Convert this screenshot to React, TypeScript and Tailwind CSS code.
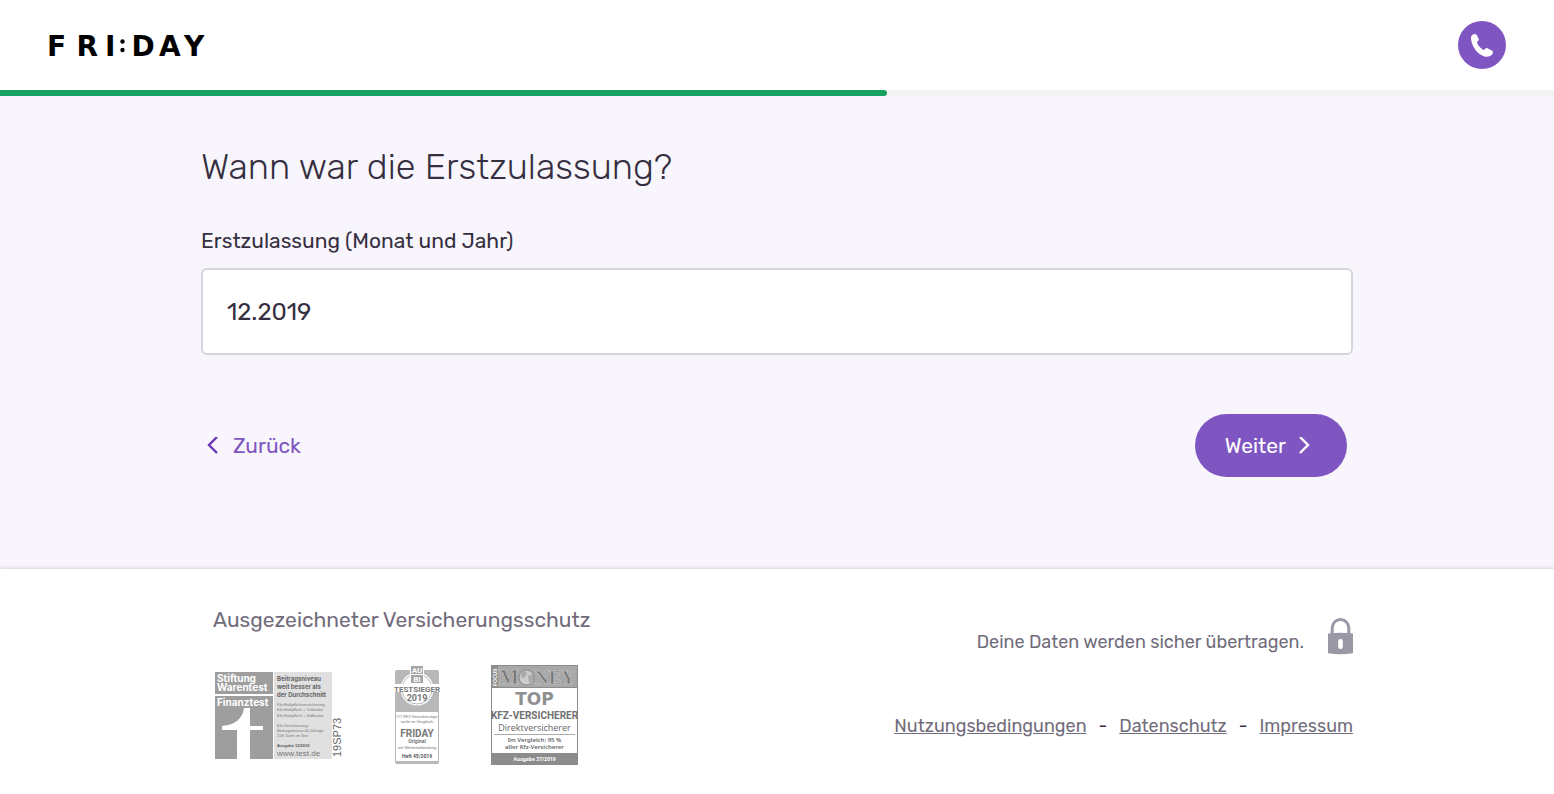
import { useState } from 'react';

function Logo() {
  return (
    <svg width="168" height="44" viewBox="-4 0 168 44" role="img" aria-label="FRI:DAY" className="-ml-1 block">
      <g className="fill-black font-['DejaVu_Sans',sans-serif] text-[28px] font-bold">
        <text x="-1" y="33">F</text>
        <text x="28.500" y="33">R</text>
        <text x="57" y="33">I</text>
        <text x="83.500" y="33">D</text>
        <text x="111" y="33">A</text>
        <text x="136" y="33">Y</text>
      </g>
      <circle cx="74.500" cy="18.500" r="2.200" />
      <circle cx="74.500" cy="27" r="2.200" />
    </svg>
  );
}

function PhoneIcon() {
  return (
    <svg width="22" height="23" viewBox="93 72 66 69" fill="#fff" aria-hidden="true">
      <path d="M96 76Q104 69 110 75L116 86Q118 91 111 95Q112 107 130 120Q133 120 137 115Q141 113 145 116L157 122Q161 126 156 134Q148 142 136 140C115 135 97 112 94 92Q91 80 96 76Z" />
    </svg>
  );
}

function Chevron({ left = false }: { left?: boolean }) {
  return (
    <svg width="12" height="18" viewBox="0 0 12 18" fill="none" stroke="currentColor" strokeWidth="2.4" aria-hidden="true">
      <path d={left ? 'M10 0L2 8L10 16' : 'M2 0L10 8L2 16'} />
    </svg>
  );
}

function LockIcon() {
  return (
    <svg width="25" height="37" viewBox="0 0 25 37" aria-hidden="true">
      <path d="M4.200 16V10a8.300 8.500 0 0 1 16.600 0V16" fill="none" stroke="#9b98a5" strokeWidth="3" />
      <path d="M0 15.500Q12.500 14 25 15.500V35.300Q12.500 37 0 35.300Z" fill="#9b98a5" />
      <rect x="10.200" y="21" width="4.600" height="10" rx="2.300" fill="#fff" />
    </svg>
  );
}

function StiftungSeal() {
  return (
    <svg width="130" height="90" viewBox="0 -1 130 90" role="img" aria-label="Stiftung Warentest Finanztest">
      <rect x="0" y="1" width="58" height="22" fill="#9e9e9e" />
      <rect x="0" y="25" width="58" height="63" fill="#9e9e9e" />
      <rect x="59" y="1" width="58" height="87" fill="#e0e0e0" />
      <path d="M35 37V55H48V59H35V88H22V59H7V55Q27 53 29 37Z" fill="#fff" />
      <g className="fill-white font-['Inter',sans-serif] text-[10px] font-bold">
        <text x="2" y="11">Stiftung</text>
        <text x="2" y="20">Warentest</text>
        <text x="2" y="35">Finanztest</text>
      </g>
      <g className="fill-[#666] font-['Inter',sans-serif] text-[6px] font-bold">
        <text x="62" y="10">Beitragsniveau</text>
        <text x="62" y="18">weit besser als</text>
        <text x="62" y="26">der Durchschnitt</text>
      </g>
      <g className="fill-[#777] font-['Liberation_Sans',sans-serif] text-[4px]">
        <text x="62" y="35">Kfz-Haftpflichtversicherung</text>
        <text x="62" y="40">Kfz-Haftpflicht + Teilkasko</text>
        <text x="62" y="46">Kfz-Haftpflicht + Vollkasko</text>
        <text x="62" y="56">Kfz-Versicherung:</text>
        <text x="62" y="61">Beitragsniveau 40-Jährige</text>
        <text x="62" y="66">158 Tarife im Test</text>
      </g>
      <text x="62" y="76" className="fill-[#555] font-['Liberation_Sans',sans-serif] text-[4px] font-bold">Ausgabe 12/2019</text>
      <text x="62" y="85" className="fill-[#777] font-['Liberation_Sans',sans-serif] text-[8px]">www.test.de</text>
      <text transform="translate(126 86) rotate(-90)" className="fill-[#666] font-['Liberation_Sans',sans-serif] text-[11px]">19SP73</text>
    </svg>
  );
}

function TestsiegerSeal() {
  return (
    <svg width="48" height="98" viewBox="-1 0 48 98" role="img" aria-label="Auto Bild Testsieger 2019">
      <rect x="1" y="4" width="44" height="94" rx="2" fill="#b8b8b8" />
      <rect x="2" y="46" width="42" height="49" fill="#fff" />
      <circle cx="23" cy="23" r="16.500" fill="#fff" />
      <circle cx="23" cy="23" r="15" fill="#fff" stroke="#b8b8b8" />
      <rect x="16" y="0" width="14" height="17" fill="#fff" />
      <rect x="17" y="0" width="12" height="8" fill="#a3a3a3" />
      <rect x="17" y="9" width="12" height="8" fill="#a3a3a3" />
      <g textAnchor="middle" className="fill-white font-['Roboto',sans-serif] text-[8px] font-bold">
        <text x="23" y="7">AU</text>
        <text x="23" y="16">BI</text>
      </g>
      <rect x="0" y="18" width="46" height="8" fill="#fff" />
      <g textAnchor="middle" className="fill-[#777] font-['Roboto',sans-serif] font-bold">
        <text x="23" y="26" className="text-[8px]">TESTSIEGER</text>
        <text x="23" y="35" className="text-[9px]">2019</text>
        <text x="23" y="71" className="text-[10px]">FRIDAY</text>
        <text x="23" y="77" className="text-[5px]">Original</text>
        <text x="23" y="92" className="fill-[#555] text-[5px]">Heft 45/2019</text>
      </g>
      <g textAnchor="middle" className="fill-[#777] font-['Roboto',sans-serif] text-[4px]">
        <text x="23" y="52">177 KFZ-Versicherungs-</text>
        <text x="23" y="57">tarife im Vergleich</text>
        <text x="23" y="83">mit Werkstattbindung</text>
      </g>
    </svg>
  );
}

function FocusMoneySeal() {
  return (
    <svg width="87" height="100" viewBox="0 0 87 100" role="img" aria-label="Focus Money Top Kfz-Versicherer">
      <rect width="87" height="100" fill="#8c8c8c" />
      <rect x="7" y="1" width="79" height="21" fill="#a8a8a8" />
      <rect x="1" y="23" width="85" height="65" fill="#fff" />
      <text transform="translate(6 21) rotate(-90)" className="fill-white font-['Liberation_Sans',sans-serif] text-[5px] font-bold">FOCUS</text>
      <g className="fill-[#777] stroke-[#d0d0d0] font-['Liberation_Serif',serif] font-bold" strokeWidth="0.500">
        <text x="8" y="19" className="text-[21px]">M</text>
        <text x="44" y="19" className="text-[19px]">NEY</text>
      </g>
      <circle cx="35.500" cy="12.500" r="7.500" fill="#ccc" stroke="#888" />
      <path d="M30 9Q33 4 36 8L34 12L31 13ZM37 11L42 9V15L38 18Z" fill="#aaa" />
      <text x="43.500" y="40" textAnchor="middle" className="fill-[#909090] font-['DejaVu_Sans',sans-serif] text-[17px] font-bold">TOP</text>
      <text x="43.500" y="54" textAnchor="middle" className="fill-[#707070] font-['Liberation_Sans_Narrow','Roboto',sans-serif] text-[10px] font-bold">KFZ-VERSICHERER</text>
      <text x="43.500" y="66" textAnchor="middle" className="fill-[#666] font-['Open_Sans',sans-serif] text-[9px]">Direktversicherer</text>
      <path d="M3 69.500H84" stroke="#aaa" />
      <g textAnchor="middle" className="fill-[#666] font-['Noto_Sans',sans-serif] text-[6px] font-semibold">
        <text x="43.500" y="77">Im Vergleich: 95 %</text>
        <text x="43.500" y="84">aller Kfz-Versicherer</text>
      </g>
      <text x="43.500" y="96" textAnchor="middle" className="fill-white font-['Noto_Sans',sans-serif] text-[5px] font-bold">Ausgabe 37/2019</text>
    </svg>
  );
}

export default function App() {
  const [date, setDate] = useState('12.2019');

  return (
    <div className="flex min-h-screen flex-col bg-white font-['Rubik','Roboto',sans-serif] text-[#352f41]">
      <header className="flex h-[90px] items-center justify-between px-12">
        <a href="#start" aria-label="FRI:DAY">
          <Logo />
        </a>
        <button type="button" aria-label="Anrufen" className="flex size-12 items-center justify-center rounded-full bg-[#7f56c1]">
          <PhoneIcon />
        </button>
      </header>
      <div className="h-1.5 bg-[#f3f3f3]">
        <div className="h-full w-[57.1%] rounded-r-[3px] bg-[#17a160]" />
      </div>

      <main className="bg-[#f8f5fc] pt-12 pb-[92px]">
        <form className="mx-auto max-w-6xl" onSubmit={(e) => e.preventDefault()}>
          <h1 className="text-4xl leading-[46px] font-light">Wann war die Erstzulassung?</h1>
          <label htmlFor="registration" className="mt-[35px] block text-[21px] leading-8">
            Erstzulassung (Monat und Jahr)
          </label>
          <input
            id="registration"
            type="text"
            value={date}
            onChange={(e) => setDate(e.target.value)}
            className="mt-[11px] block h-[87px] w-full rounded-md border-2 border-[#d6d4db] bg-white px-6 text-2xl outline-none focus:border-[#7f56c1]"
          />
          <div className="mt-[59px] flex items-center justify-between px-1.5">
            <button type="button" className="flex items-center gap-[14px] text-[21px] leading-8 text-[#7f56c1]">
              <span className="text-[#6a35b8]">
                <Chevron left />
              </span>
              Zurück
            </button>
            <button
              type="submit"
              className="flex h-[63px] items-center gap-3 rounded-full bg-[#7f56c1] pr-[37px] pl-[30px] text-[21px] leading-8 text-white"
            >
              Weiter
              <Chevron />
            </button>
          </div>
        </form>
      </main>

      <footer className="relative flex-1 bg-white pt-9 pb-7 shadow-[0_0_5px_rgba(0,0,0,0.2)]">
        <div className="mx-auto flex max-w-6xl justify-between pl-3 text-[#716c7b]">
          <section>
            <h2 className="text-[21px] leading-[30px]">Ausgezeichneter Versicherungsschutz</h2>
            <div className="mt-[30px] flex items-center pl-0.5">
              <StiftungSeal />
              <div className="ml-12">
                <TestsiegerSeal />
              </div>
              <div className="ml-[50px]">
                <FocusMoneySeal />
              </div>
            </div>
          </section>
          <section className="flex flex-col items-end pt-[13px]">
            <div className="flex items-end gap-6">
              <p className="text-lg leading-[26px]">Deine Daten werden sicher übertragen.</p>
              <LockIcon />
            </div>
            <nav className="mt-[55px] flex gap-3 text-lg leading-8">
              <a href="#nutzungsbedingungen" className="underline">Nutzungsbedingungen</a>
              <span className="text-[#352f41]">-</span>
              <a href="#datenschutz" className="underline">Datenschutz</a>
              <span className="text-[#352f41]">-</span>
              <a href="#impressum" className="underline">Impressum</a>
            </nav>
          </section>
        </div>
      </footer>
    </div>
  );
}
